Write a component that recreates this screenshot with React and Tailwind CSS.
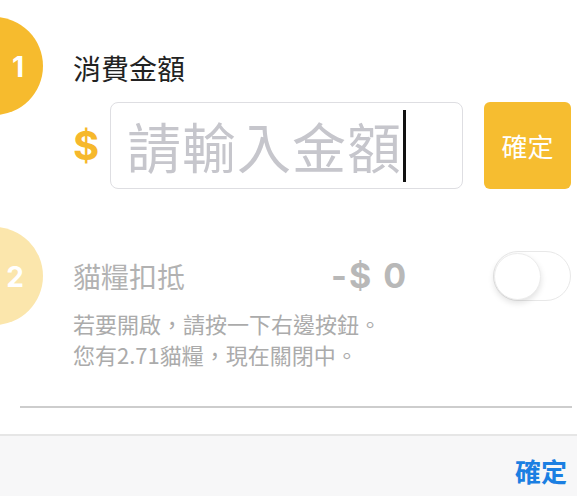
import React from "react";

const cjk = "font-['Noto_Sans_CJK_TC',sans-serif]";
const num = "font-['Inter','Noto_Sans_CJK_TC',sans-serif]";

function StepCircle({ n, pale }) {
  return (
    <div
      className={`ml-[-55px] w-[98px] h-[98px] shrink-0 rounded-full flex items-center justify-end pr-[19px] ${
        pale ? "bg-[#fbe6ac]" : "bg-[#f6bb2e]"
      }`}
    >
      <span className={`${num} text-white font-bold text-[28px] leading-none mt-[2px]`}>{n}</span>
    </div>
  );
}

export default function App() {
  return (
    <div className={`w-[577px] h-[496px] bg-white flex flex-col overflow-hidden ${cjk}`}>
      <div className="h-[434px] shrink-0 flex flex-col">
        {/* Step 1 */}
        <div className="flex pt-[17px]">
          <StepCircle n="1" />
          <div className="ml-[30px] pt-[35px]">
            <div className="text-[28px] leading-[32px] text-[#222]">消費金額</div>
            <div className="flex items-center mt-[18px] h-[87px]">
              <span className={`${num} text-[40px] font-bold text-[#f6b82c] w-[25px] leading-none`}>$</span>
              <div className="ml-[12px] w-[353px] h-[87px] border border-[#dedee2] rounded-[8px] flex items-center pl-[16px]">
                <span className="text-[54px] leading-none text-[#c6c6cc] tracking-[1px]">請輸入金額</span>
                <span className="w-[3px] h-[72px] bg-[#111] ml-[1px]" />
              </div>
              <button className="ml-[21px] w-[87px] h-[87px] rounded-[6px] bg-[#f6bd30] text-white text-[26px] flex items-center justify-center">
                確定
              </button>
            </div>
          </div>
        </div>

        {/* Step 2 */}
        <div className="flex mt-[38px]">
          <StepCircle n="2" pale />
          <div className="ml-[30px]">
            <div className="flex items-center mt-[25px] h-[48px]">
              <span className="w-[258px] text-[28px] leading-[32px] text-[#b2b2b2]">貓糧扣抵</span>
              <span className={`${num} w-[162px] text-[34px] font-bold text-[#b8b8b8] tracking-[2px] leading-none`}>
                -$ 0
              </span>
              <div className="w-[78px] h-[50px] rounded-full border border-[#e8e8e8] bg-white flex items-center">
                <div className="w-[47px] h-[47px] rounded-full bg-white border border-[#ececec] shadow-[0_3px_6px_rgba(0,0,0,0.12)]" />
              </div>
            </div>
            <div className="mt-[8px] text-[22px] leading-[31px] text-[#ababab]">
              <div>若要開啟，請按一下右邊按鈕。</div>
              <div>您有2.71貓糧，現在關閉中。</div>
            </div>
          </div>
        </div>

        <div className="ml-[20px] mr-[5px] mt-[36px] h-[2px] bg-[#cdcdcd]" />
      </div>

      {/* Footer */}
      <div className="flex-1 border-t-2 border-[#e6e6e6] bg-[#f7f7f8] flex items-center justify-end pr-[10px] pt-[8px]">
        <span className="text-[26px] font-bold text-[#1b7fe2]">確定</span>
      </div>
    </div>
  );
}
